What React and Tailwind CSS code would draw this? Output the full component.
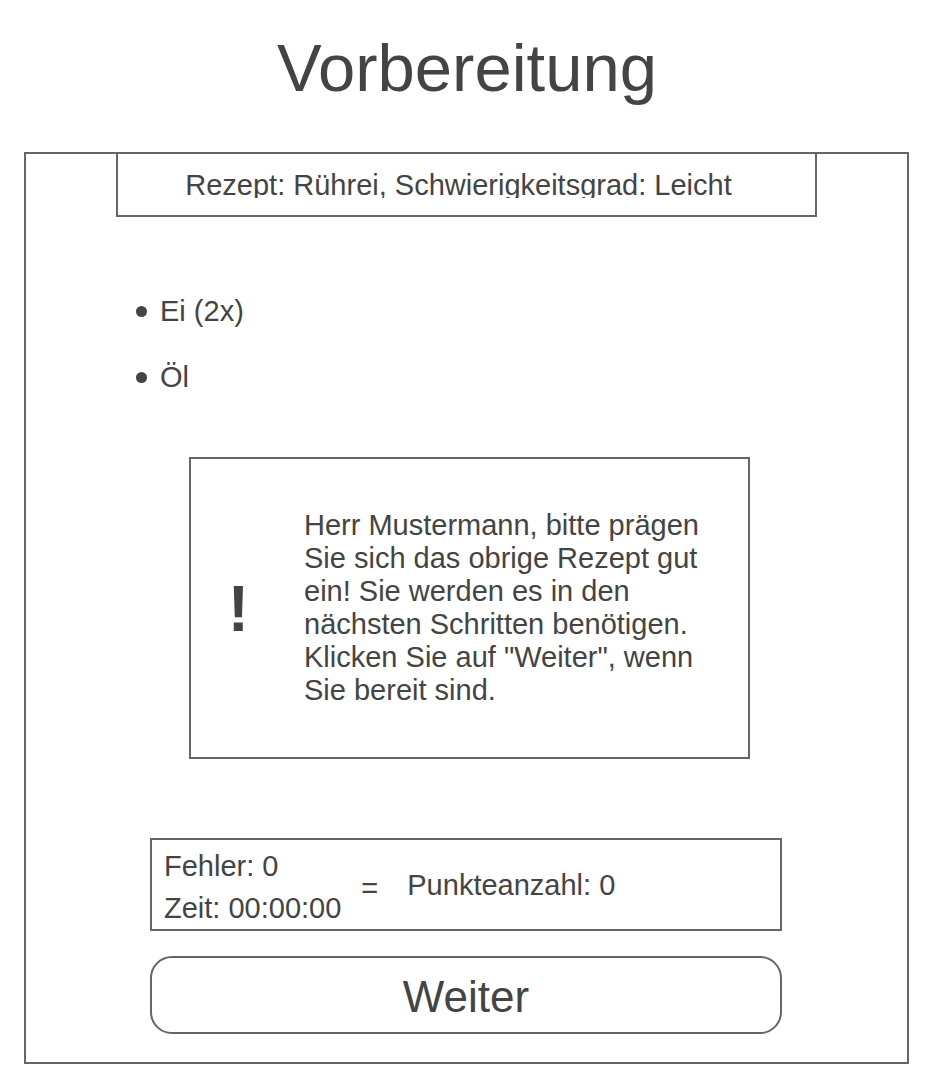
import React from "react";

const ingredients = ["Ei (2x)", "Öl"];

const App = () => {
  return (
    <div
      className="w-[930px] min-h-[1084px] bg-white text-[#444]"
      style={{ fontFamily: '"Liberation Sans", Arial, sans-serif' }}
    >
      {/* Title */}
      <div className="pt-[30px]">
        <h1 className="text-center text-[67px] leading-[76px] pl-[4px]">Vorbereitung</h1>
      </div>

      {/* Main frame */}
      <div className="mt-[46px] ml-[24px] w-[885px] h-[912px] border-2 border-[#666] flex flex-col">
        {/* Recipe header */}
        <div className="mx-auto w-[701px] h-[63px] border-x-2 border-b-2 border-[#666] flex justify-center pt-[15px] pr-[16px]">
          <div className="h-[29px] overflow-hidden text-[29px] leading-[32px] whitespace-nowrap">
            Rezept: Rührei, Schwierigkeitsgrad: Leicht
          </div>
        </div>

        {/* Ingredients */}
        <ul className="mt-[78px] ml-[110px] flex flex-col gap-[34px]">
          {ingredients.map((item) => (
            <li key={item} className="flex items-center h-[32px] text-[29px] leading-[32px]">
              <span className="w-[11px] h-[11px] rounded-full bg-[#444] mr-[13px]" />
              {item}
            </li>
          ))}
        </ul>

        {/* Notice */}
        <div className="mt-[64px] ml-[163px] w-[561px] h-[302px] border-2 border-[#666] flex items-center">
          <div className="w-[95px] text-center text-[64px] font-bold leading-[70px] pt-[2px]">!</div>
          <p className="ml-[18px] w-[410px] text-[29px] leading-[33px]">
            Herr Mustermann, bitte prägen Sie sich das obrige Rezept gut ein! Sie werden es in den
            nächsten Schritten benötigen. Klicken Sie auf "Weiter", wenn Sie bereit sind.
          </p>
        </div>

        {/* Score */}
        <div className="mt-[79px] ml-[124px] w-[632px] h-[93px] border-2 border-[#666] flex items-center text-[29px] leading-[32px]">
          <div className="ml-[12px] flex flex-col gap-[10px] pt-[4px]">
            <span>Fehler: 0</span>
            <span>Zeit: 00:00:00</span>
          </div>
          <span className="ml-[20px] pt-[6px]">=</span>
          <span className="ml-[29px]">Punkteanzahl: 0</span>
        </div>

        {/* Button */}
        <button className="mt-[25px] ml-[124px] w-[632px] h-[78px] border-2 border-[#666] rounded-[22px] text-[44px] leading-[50px] pt-[3px] text-[#444] bg-white">
          Weiter
        </button>
      </div>
    </div>
  );
};

export default App;
